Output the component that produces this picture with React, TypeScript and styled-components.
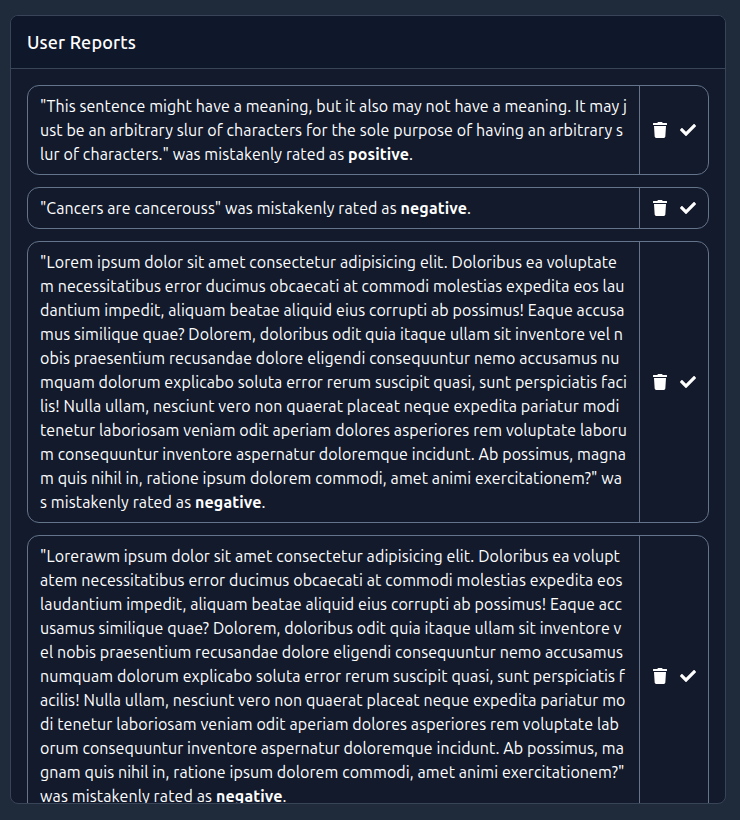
import React, { useLayoutEffect, useRef } from "react";
import styled, { createGlobalStyle } from "styled-components";
import { FaCheck, FaTrash } from "react-icons/fa";

const GlobalStyle = createGlobalStyle`
  *, *::before, *::after { box-sizing: border-box; }
  body {
    margin: 0;
    background: #1f2a3a;
    color: #fff;
    font-family: Ubuntu, "Noto Sans", sans-serif;
    font-size: 16px;
    line-height: 24px;
  }
`;

const Page = styled.main`
  height: 820px;
  padding: 15px 14px 16px 10px;
  overflow: hidden;
`;

const Panel = styled.section`
  display: flex;
  flex-direction: column;
  height: 789px;
  overflow: hidden;
  background: #121a2c;
  border: 1px solid #384559;
  border-radius: 8px;
`;

const PanelHeader = styled.header`
  flex: none;
  height: 53px;
  padding: 12px 16px;
  background: #0f172a;
  border-bottom: 1px solid #384559;
`;

const Title = styled.h1`
  margin: 0;
  font-size: 18px;
  font-weight: 500;
  line-height: 28px;
`;

const ReportList = styled.div`
  display: flex;
  flex-direction: column;
  gap: 12px;
  min-height: 0;
  padding: 16px;
  overflow: hidden;
`;

const ReportCard = styled.article`
  display: flex;
  flex: none;
  border: 1px solid #64748b;
  border-radius: 12px;
`;

const ReportText = styled.div`
  flex: 1;
  min-width: 0;
  padding: 8px 12px;
`;

const Actions = styled.div`
  display: flex;
  flex: none;
  align-items: center;
  gap: 12px;
  padding: 0 12px;
  border-left: 1px solid #64748b;
`;

const ActionButton = styled.button`
  display: flex;
  padding: 0;
  border: 0;
  background: none;
  color: #fff;
  font-size: 16px;
  cursor: pointer;
`;

const LineRow = styled.div`
  height: 24px;
  white-space: pre;
`;

type LineData = { text: string; width: number; rating?: string };

/** Tracks a line of text so that it spans the given width. */
function Fitted({ width, children }: { width: number; children: React.ReactNode }) {
  const ref = useRef<HTMLSpanElement>(null);
  useLayoutEffect(() => {
    const el = ref.current;
    if (!el) return;
    el.style.letterSpacing = "0px";
    const natural = el.getBoundingClientRect().width;
    const count = el.textContent?.length ?? 1;
    el.style.letterSpacing = `${(width - natural) / count}px`;
  }, [width, children]);
  return <span ref={ref}>{children}</span>;
}

const reports: LineData[][] = [
  [
    { text: '"This sentence might have a meaning, but it also may not have a meaning. It may j', width: 587 },
    { text: "ust be an arbitrary slur of characters for the sole purpose of having an arbitrary s", width: 583 },
    { text: 'lur of characters." was mistakenly rated as ', width: 308, rating: "positive" },
  ],
  [{ text: '"Cancers are cancerouss" was mistakenly rated as ', width: 360.5, rating: "negative" }],
  [
    { text: '"Lorem ipsum dolor sit amet consectetur adipisicing elit. Doloribus ea voluptate', width: 577 },
    { text: "m necessitatibus error ducimus obcaecati at commodi molestias expedita eos lau", width: 584.5 },
    { text: "dantium impedit, aliquam beatae aliquid eius corrupti ab possimus! Eaque accusa", width: 584.5 },
    { text: "mus similique quae? Dolorem, doloribus odit quia itaque ullam sit inventore vel n", width: 583 },
    { text: "obis praesentium recusandae dolore eligendi consequuntur nemo accusamus nu", width: 579.5 },
    { text: "mquam dolorum explicabo soluta error rerum suscipit quasi, sunt perspiciatis faci", width: 587 },
    { text: "lis! Nulla ullam, nesciunt vero non quaerat placeat neque expedita pariatur modi", width: 579.5 },
    { text: "tenetur laboriosam veniam odit aperiam dolores asperiores rem voluptate laboru", width: 587 },
    { text: "m consequuntur inventore aspernatur doloremque incidunt. Ab possimus, magna", width: 586 },
    { text: 'm quis nihil in, ratione ipsum dolorem commodi, amet animi exercitationem?" wa', width: 582 },
    { text: "s mistakenly rated as ", width: 155, rating: "negative" },
  ],
  [
    { text: '"Lorerawm ipsum dolor sit amet consectetur adipisicing elit. Doloribus ea volupt', width: 580 },
    { text: "atem necessitatibus error ducimus obcaecati at commodi molestias expedita eos", width: 582.5 },
    { text: "laudantium impedit, aliquam beatae aliquid eius corrupti ab possimus! Eaque acc", width: 582 },
    { text: "usamus similique quae? Dolorem, doloribus odit quia itaque ullam sit inventore v", width: 581.5 },
    { text: "el nobis praesentium recusandae dolore eligendi consequuntur nemo accusamus", width: 583 },
    { text: "numquam dolorum explicabo soluta error rerum suscipit quasi, sunt perspiciatis f", width: 585 },
    { text: "acilis! Nulla ullam, nesciunt vero non quaerat placeat neque expedita pariatur mo", width: 585.5 },
    { text: "di tenetur laboriosam veniam odit aperiam dolores asperiores rem voluptate lab", width: 579 },
    { text: "orum consequuntur inventore aspernatur doloremque incidunt. Ab possimus, ma", width: 584 },
    { text: 'gnam quis nihil in, ratione ipsum dolorem commodi, amet animi exercitationem?"', width: 584.5 },
    { text: "was mistakenly rated as ", width: 176, rating: "negative" },
  ],
];

export default function App() {
  return (
    <>
      <GlobalStyle />
      <Page>
        <Panel>
          <PanelHeader>
            <Title><Fitted width={109}>User Reports</Fitted></Title>
          </PanelHeader>
          <ReportList>
            {reports.map((lines, i) => (
              <ReportCard key={i}>
                <ReportText>
                  {lines.map((line) => (
                    <LineRow key={line.text}>
                      <Fitted width={line.width}>{line.text}</Fitted>
                      {line.rating && (
                        <>
                          <Fitted width={line.rating === "positive" ? 61 : 66.5}>
                            <b>{line.rating}</b>
                          </Fitted>
                          .
                        </>
                      )}
                    </LineRow>
                  ))}
                </ReportText>
                <Actions>
                  <ActionButton aria-label="Delete report"><FaTrash /></ActionButton>
                  <ActionButton aria-label="Accept report"><FaCheck /></ActionButton>
                </Actions>
              </ReportCard>
            ))}
          </ReportList>
        </Panel>
      </Page>
    </>
  );
}
